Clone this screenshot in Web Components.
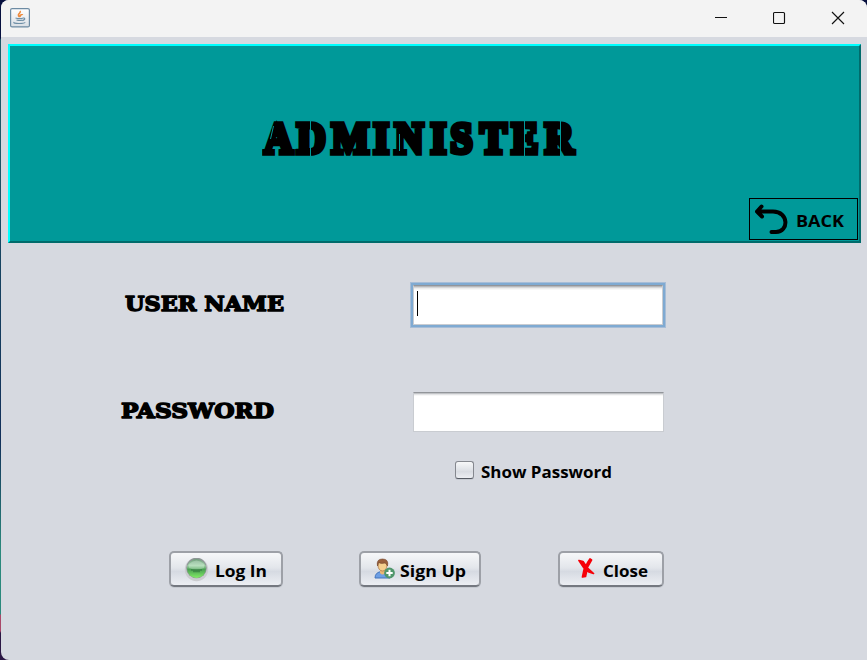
<!DOCTYPE html>
<html lang="en"><head><meta charset="utf-8"><title>Administer</title>
<style>html,body{margin:0;height:100%;overflow:hidden}body{background:#10214f;font-family:"Open Sans","Liberation Sans",sans-serif}</style></head>
<body>
<app-window>
  <title-bar slot="title"></title-bar>
  <hero-banner><back-button slot="action"></back-button></hero-banner>
  <login-form></login-form>
</app-window>
<script>
const define = (name, html) => customElements.define(name, class extends HTMLElement {
  constructor(){ super(); const t=document.createElement('template'); t.innerHTML=html; this.attachShadow({mode:'open'}).append(t.content.cloneNode(true)); }
});

/* A line of text fitted to a given width */
customElements.define('fit-text', class extends HTMLElement {
  connectedCallback(){
    if(this.shadowRoot) return;
    const g=(n,d)=>this.getAttribute(n)||d, w=+g('w'), h=+g('h');
    this.attachShadow({mode:'open'}).innerHTML=`<style>:host{display:block;width:${w}px;height:${h}px;flex:none}svg{display:block;overflow:visible}</style>
    <svg width="${w}" height="${h}"><text x="0" y="${g('base',h)}" textLength="${w}" lengthAdjust="spacingAndGlyphs" font-family="${g('face',"'Open Sans',sans-serif")}" font-size="${g('size',16)}" font-weight="700" stroke="#000" stroke-width="${g('stroke',0)}" stroke-linejoin="round">${g('text','')}</text></svg>`;
  }
});

define('app-window', `<style>
:host{display:block;height:660px;padding-left:1px;box-sizing:border-box;background:linear-gradient(#07103f 0 38px,#205968 40px 150px,#174561 250px,#12305a 440px,#2b897c 550px 614px,#a94869 615px 631px,#2b1744 633px)}
.w{height:660px;background:#d6d9e0;border-radius:8px 8px 0 8px;overflow:hidden;display:flex;flex-direction:column}
</style><div class="w"><slot name="title"></slot><slot></slot></div>`);

define('title-bar', `<style>
:host{display:flex;height:37px;flex:none;background:#f3f3f3;align-items:flex-start;justify-content:space-between;box-sizing:border-box;padding:8px 22px 0 9px}
.c{display:flex;gap:45px;padding-top:3px}svg{display:block}.c svg{fill:none;stroke:#111;stroke-width:1.15}
</style>
<svg width="20" height="20" viewBox="0 0 20 20"><defs><linearGradient id="g" x2="0" y2="1"><stop stop-color="#fff"/><stop offset="1" stop-color="#d9dfe5"/></linearGradient></defs><rect x=".6" y=".6" width="18.8" height="18.3" rx="1.5" fill="url(#g)" stroke="#6d8ba3" stroke-width="1.2"/><path d="M9.500 9C6 6 12 5 10 3M10.500 9c-2-2 2-2 2-3" fill="none" stroke="#ee8a3c" stroke-width="1.600"/><path d="M5.500 10q4 1.200 8 0M6.500 12q3.500 1 6 0M13.500 9.800q3 1-1 3M4 14q-1 1.500 5 1.500t6-1.200" fill="none" stroke="#6f8fa6" stroke-width="1.200"/></svg>
<div class="c"><svg width="13" height="14"><path d="M0 6.500h12" stroke-width="1"/></svg><svg width="13" height="14"><rect x=".5" y="1.500" width="11" height="11" rx="1"/></svg><svg width="14" height="14"><path d="M1 1l12 12M13 1L1 13"/></svg></div>`);

define('hero-banner', `<style>
:host{display:flex;flex-direction:column;flex:none;box-sizing:border-box;margin:7px 7px 0 7px;width:853px;height:199px;background:#009999;border:2px solid;border-color:#00ffff #006b6b #006b6b #00ffff}
.t{height:152px;flex:none;padding-left:252px;box-sizing:border-box}
.b{display:flex;justify-content:flex-end;padding-right:1px}svg{display:block}
</style><div class="t"><svg width="320" height="152" viewBox="262 46 320 152">
<text transform="scale(.9 1)" y="152.800" x="293.500 330 368.500 415 438.500 478.500 500.500 533.500 568.500 605.500" font-family="'Liberation Serif',serif" font-weight="700" font-size="44" stroke="#000" stroke-width="5.500">ADMINISTER</text>
<g stroke="#009999" stroke-width="1" fill="none"><path d="M310.500 120v36M399.500 134v17M524.500 120v36M560.500 120v36M273.500 126l-3 13"/></g>
</svg></div><div class="b"><slot name="action"></slot></div>`);

define('back-button', `<style>
:host{display:flex;width:109px;height:42px;box-sizing:border-box;border:1px solid #000;padding:5px 0 0 5px;align-items:flex-start;gap:8px}
svg{display:block;flex:none}fit-text{margin-top:11px}
</style><svg width="33" height="32"><path d="M6.500 2.500L2 7.500l5 5M2 7.500h16c16 0 16 20.500 3 20.500h-4.500" fill="none" stroke="#000" stroke-width="4" stroke-linecap="round" stroke-linejoin="round"/></svg>
<fit-text text="BACK" w="48" h="12" size="16.500"></fit-text>`);

define('text-field', `<style>
:host{display:block;width:251px;height:40px;margin-left:1px;box-sizing:border-box;border:1px solid #c9ccd1;border-top:1px solid #92959a;background:#fff;box-shadow:inset 0 1px #c1c3c6,inset 0 2px #e4e5e7,inset 0 3px #f7f7f7}
:host([focused]){width:250px;margin-top:1px;outline:2px solid #7faad2;box-shadow:0 0 0 3px #a7bdd7,inset 0 1px #b6b8bb,inset 0 2px #d5d6d8,inset 0 3px #ededed,inset 0 4px #f7f7f7}
i{display:none}:host([focused]) i{display:block;width:1px;height:25px;background:#000;margin:5px 0 0 3px}
</style><i></i>`);

define('check-box', `<style>
:host{display:flex;gap:7px;align-items:flex-start}
i{display:block;width:19px;height:18px;box-sizing:border-box;border:1px solid #85888f;border-bottom-color:#555a63;border-radius:3px;background:linear-gradient(#f7f8f9,#dfe2e7 50%,#d9dce2 60%,#eceef2);box-shadow:0 1px #c6cad1}
fit-text{margin-top:4px}
</style><i></i><fit-text text="Show Password" w="131" h="13" base="12.500" size="16.500"></fit-text>`);

define('push-button', `<style>
:host{display:flex;box-sizing:border-box;height:36px;border:2px solid #9da0a7;border-bottom-color:#747880;border-radius:5px;background:linear-gradient(#f6f7f9,#e3e6eb 46%,#d6dae2 58%,#eceef3);box-shadow:0 1px #c5c9d0;align-items:flex-start;gap:5px;padding-top:5px}
::slotted(fit-text){margin-top:6px}
</style><slot></slot>`);

define('login-form', `<style>
:host{display:block;flex:1;padding:41px 0 0 120px}
.r{display:grid;grid-template-columns:291px 260px;height:108px}
.r.p{height:69px}.u{margin:11px 0 0 4px}.pw{margin-top:10px}
check-box{padding-left:334px;height:90px;box-sizing:border-box}
.buttons{display:flex;padding-left:48px}
.buttons push-button:nth-child(1){width:114px;margin-right:76px;padding-left:13px}
.buttons push-button:nth-child(1) fit-text{margin-left:1px}
.buttons push-button:nth-child(2){width:122px;margin-right:77px;padding-left:13px}
.buttons push-button:nth-child(3){width:106px;padding-left:17px}
svg{display:block;flex:none}
</style>
<div class="r"><fit-text class="u" text="USER NAME" w="159" h="17" base="16" size="21" face="'DejaVu Serif',serif" stroke="1.500"></fit-text><text-field focused></text-field></div>
<div class="r p"><fit-text class="pw" text="PASSWORD" w="153" h="17" base="16" size="21" face="'DejaVu Serif',serif" stroke="1.500"></fit-text><text-field></text-field></div>
<check-box></check-box>
<div class="buttons">
<push-button><svg width="25" height="24" viewBox="0 0 25 24"><defs><linearGradient id="n" x2="0" y2="1"><stop stop-color="#6f9d7b"/><stop offset=".35" stop-color="#a5d5ab"/><stop offset=".55" stop-color="#4aa052"/><stop offset="1" stop-color="#83ee67"/></linearGradient></defs><circle cx="12.500" cy="11.500" r="11.700" fill="#cbccd0"/><circle cx="12.500" cy="10" r="10.300" fill="#8e9796"/><circle cx="12.500" cy="10.500" r="9.500" fill="url(#n)"/><path d="M5 6Q12.500-1 20 6v4Q12.500 13 5 10z" fill="#e5faea" opacity=".3"/><path d="M7 12h11M9 13.500h7" stroke="#286837" stroke-width="1.300" opacity=".5"/></svg><fit-text text="Log In" w="52" h="13" base="12.500" size="16.500"></fit-text></push-button>
<push-button><svg width="21" height="22" viewBox="0 0 21 22"><path d="M1 20q0-6 7-6.500 7 0 8 6.500z" fill="#6d9ee4" stroke="#4375bd"/><path d="M6 11h5v4q-2.500 3-5 0z" fill="#eab675"/><ellipse cx="8.500" cy="7.500" rx="4.500" ry="5.500" fill="#f5ce8d" stroke="#a46b40" stroke-width=".7"/><path d="M3.500 8Q2 1 8.500 1T13.500 8Q12 5 11 5 7 6 4.500 4.500z" fill="#9a5f3b" stroke="#704126" stroke-width=".6"/><circle cx="15.500" cy="15" r="5.400" fill="#4f966b"/><path d="M15.500 11.800v6.400M12.300 15h6.400" stroke="#fff" stroke-width="2"/></svg><fit-text text="Sign Up" w="66" h="13" base="12.500" size="16.500"></fit-text></push-button>
<push-button><svg width="21" height="22" viewBox="0 0 21 22"><path d="M2 2.500l4 1 4 6 6.500 6-4.500-1.500-5-4-4-6zM13 1l1.500 1-4 7-2 9.500-3 .5 1.500-7 4-8z" fill="#f60008" stroke="#f60008" stroke-width="1.700" stroke-linejoin="round"/></svg><fit-text text="Close" w="45" h="13" base="12.500" size="16.500"></fit-text></push-button>
</div>`);
</script></body></html>
